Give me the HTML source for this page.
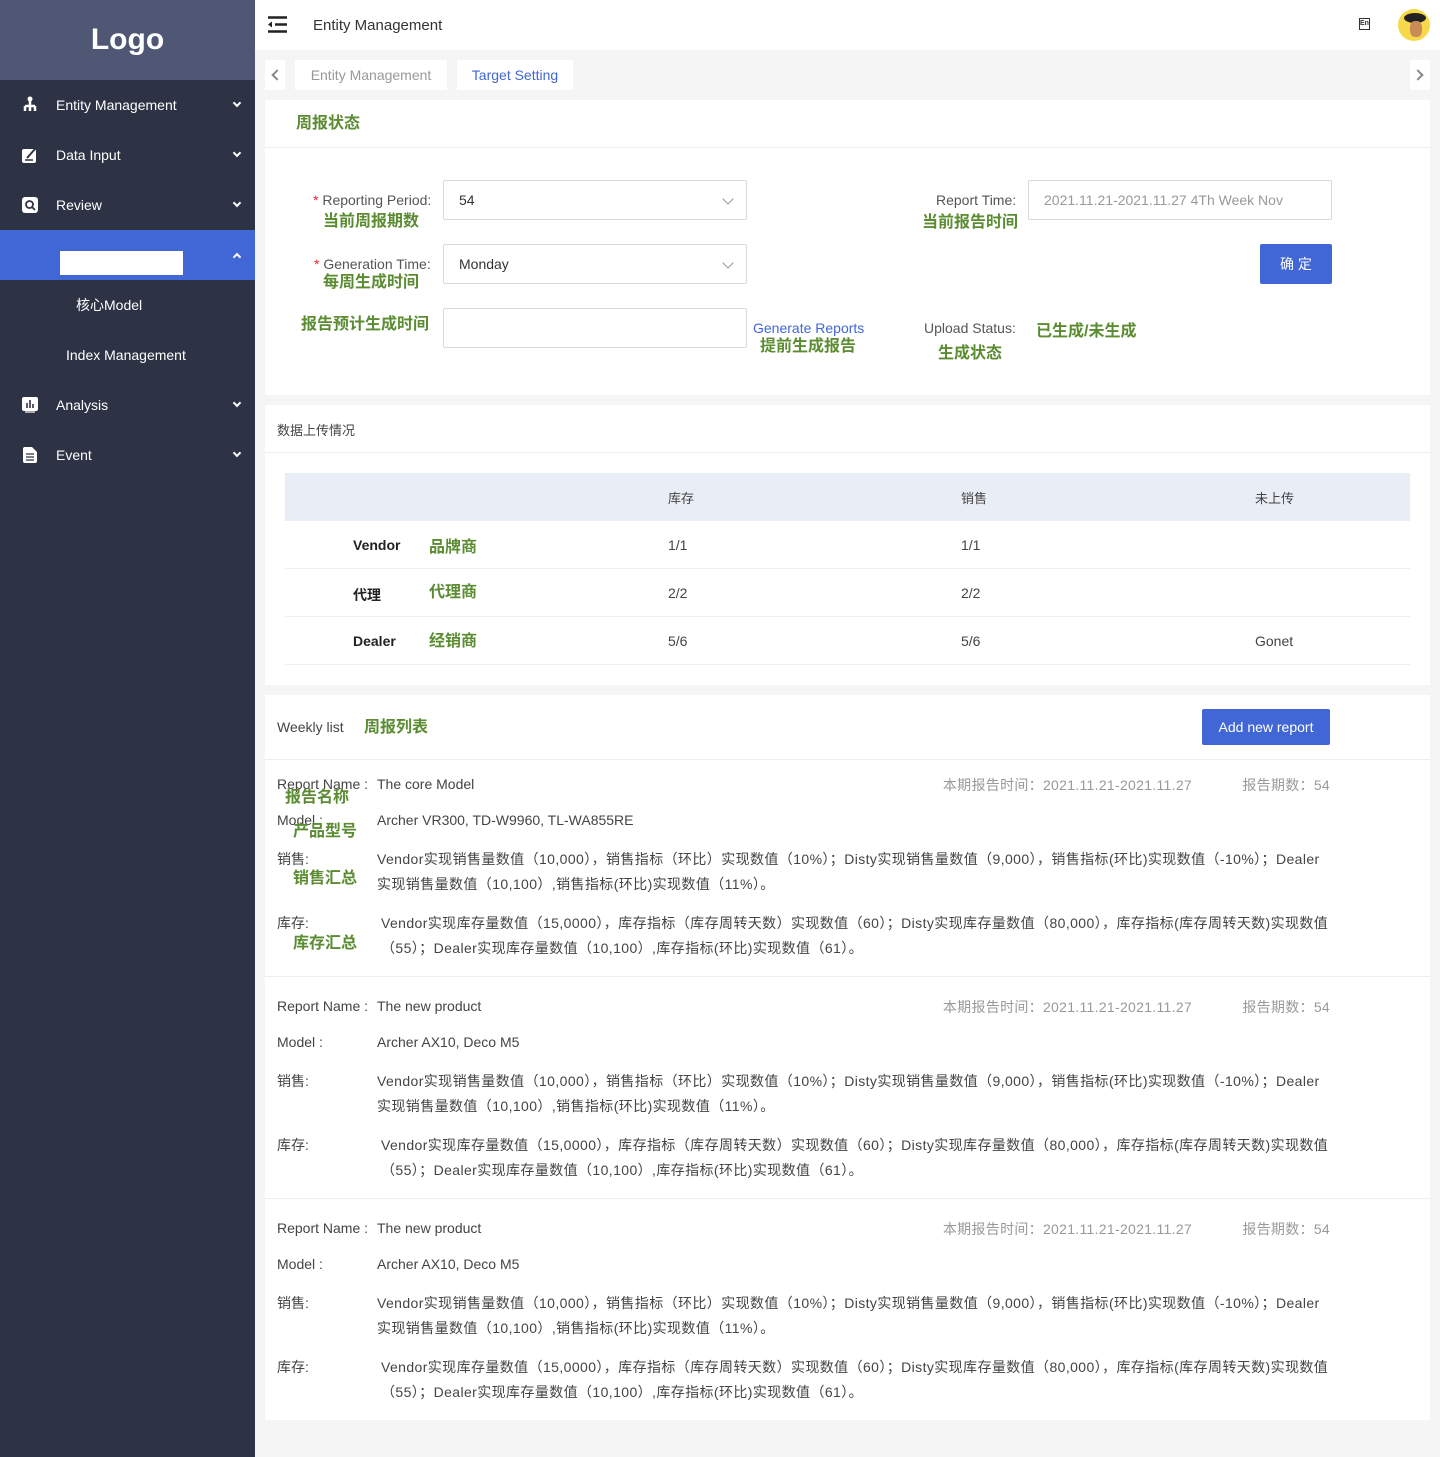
<!DOCTYPE html>
<html><head><meta charset="utf-8">
<style>
*{margin:0;padding:0;box-sizing:border-box}
body{width:1440px;height:1457px;background:#f5f5f5;font-family:"Liberation Sans","Noto Sans CJK SC",sans-serif;position:relative;overflow:hidden;color:#333}
.a{position:absolute;white-space:nowrap}
.g{color:#5b8c32;font-weight:bold;font-size:16px;margin-top:-3px}
.side{position:absolute;left:0;top:0;width:255px;height:1457px;background:#2e3245}
.logo{position:absolute;left:0;top:0;width:255px;height:80px;background:#4f5775;color:#fff;font-weight:bold;font-size:30px;text-align:center;line-height:80px}
.mi{position:absolute;left:0;width:255px;height:50px;color:#fff;font-size:14px;line-height:50px}
.mi .t{position:absolute;left:56px}
.mi .c{position:absolute;right:15px;top:20px;width:6px;height:6px;border-right:2px solid #fff;border-bottom:2px solid #fff;transform:rotate(45deg)}
.mi .cu{position:absolute;right:15px;top:24px;width:6px;height:6px;border-left:2px solid #fff;border-top:2px solid #fff;transform:rotate(45deg)}
.ic{position:absolute;left:22px;top:17px}
.card{position:absolute;left:265px;width:1165px;background:#fff}
.inp{position:absolute;border:1px solid #d9d9d9;border-radius:2px;background:#fff;height:40px;font-size:14px;line-height:38px;padding-left:15px;color:#333}
.chev{position:absolute;right:14px;top:14px;width:8px;height:8px;border-right:1px solid #999;border-bottom:1px solid #999;transform:rotate(45deg)}
.lbl{font-size:14px;color:#555}
.btn{position:absolute;background:#4166d5;color:#fff;border-radius:2px;text-align:center;font-size:14px}
.f14{font-size:14px;color:#444}
.b{letter-spacing:0.4px}
.meta{font-size:14px;color:#999;letter-spacing:0.3px}
</style></head><body>
<div class="side">
<div class="logo">Logo</div>
<div class="mi" style="top:80px"><svg class="a" style="left:22px;top:16px" width="16" height="17" viewBox="0 0 16 17"><circle cx="8" cy="3" r="2.5" fill="#fff"/><path d="M8 5v5M3 10h10M3 10v5M13 10v5M8 10v5" stroke="#fff" stroke-width="2.5"/></svg><span class="t">Entity Management</span><span class="c"></span></div>
<div class="mi" style="top:130px"><svg class="ic" width="16" height="16"><rect x="0" y="2" width="14" height="14" rx="2" fill="#fff"/><path d="M5 11l8-9" stroke="#2e3245" stroke-width="2"/><path d="M3 13h8" stroke="#2e3245" stroke-width="1.5"/></svg><span class="t">Data Input</span><span class="c"></span></div>
<div class="mi" style="top:180px"><svg class="ic" width="16" height="16"><rect x="0" y="0" width="16" height="16" rx="3" fill="#fff"/><circle cx="7.5" cy="7.5" r="3.5" fill="none" stroke="#2e3245" stroke-width="1.8"/><path d="M10 10l3 3" stroke="#2e3245" stroke-width="1.8"/></svg><span class="t">Review</span><span class="c"></span></div>
<div class="mi" style="top:230px;background:#4166d5"><div class="a" style="left:60px;top:21px;width:123px;height:24px;background:#fff"></div><span class="cu"></span></div>
<div class="mi" style="top:280px"><span class="a" style="left:76px">核心Model</span></div>
<div class="mi" style="top:330px"><span class="a" style="left:66px">Index Management</span></div>
<div class="mi" style="top:380px"><svg class="ic" width="16" height="16"><rect x="0" y="0" width="16" height="14" rx="2" fill="#fff"/><path d="M5 11V6M8 11V3M11 11V7" stroke="#2e3245" stroke-width="1.6"/><rect x="3" y="14" width="10" height="2" fill="#aaa"/></svg><span class="t">Analysis</span><span class="c"></span></div>
<div class="mi" style="top:430px"><svg class="ic" width="16" height="16"><path d="M1 2a2 2 0 012-2h7l5 5v9a2 2 0 01-2 2H3a2 2 0 01-2-2z" fill="#fff"/><path d="M4 7h8M4 10h8M4 13h8" stroke="#2e3245" stroke-width="1.3"/></svg><span class="t">Event</span><span class="c"></span></div>
</div>
<div class="a" style="left:255px;top:0;width:1185px;height:50px;background:#fff"></div>
<svg class="a" style="left:268px;top:16px" width="20" height="17"><path d="M0 1.5h19M7 8.5h12M0 15.5h19" stroke="#222" stroke-width="2.5"/><path d="M0 8.5l4-3v6z" fill="#222"/></svg>
<span class="a" style="left:313px;top:17px;font-size:15px;color:#333">Entity Management</span>
<div class="a" style="left:1359px;top:18px;width:11px;height:12px;border:1px solid #333;font-size:7px;line-height:10px;text-align:center;font-weight:bold">En</div>
<div class="a" style="left:1398px;top:9px;width:32px;height:32px;border-radius:50%;background:#f5d94a;overflow:hidden"><div class="a" style="left:6px;top:4px;width:22px;height:10px;border-radius:50%;background:#222"></div><div class="a" style="left:12px;top:12px;width:12px;height:16px;border-radius:40%;background:#c98a5a"></div></div>
<div class="a" style="left:265px;top:60px;width:20px;height:30px;background:#fff"><div class="a" style="left:8px;top:11px;width:8px;height:8px;border-left:2px solid #888;border-bottom:2px solid #888;transform:rotate(45deg)"></div></div>
<div class="a" style="left:295px;top:60px;width:152px;height:30px;background:#fff;color:#999;font-size:14px;text-align:center;line-height:30px">Entity Management</div>
<div class="a" style="left:457px;top:60px;width:116px;height:30px;background:#fff;color:#4166d5;font-size:14px;text-align:center;line-height:30px">Target Setting</div>
<div class="a" style="left:1410px;top:60px;width:20px;height:30px;background:#fff"><div class="a" style="left:4px;top:11px;width:8px;height:8px;border-right:2px solid #888;border-top:2px solid #888;transform:rotate(45deg)"></div></div>

<div class="card" style="top:100px;height:295px"></div>
<div class="a" style="left:265px;top:147px;width:1165px;height:1px;background:#eee"></div>
<span class="a g" style="left:296px;top:112px">周报状态</span>
<span class="a lbl" style="left:313px;top:192px"><span style="color:#f5222d">*</span> Reporting Period:</span>
<span class="a g" style="left:323px;top:210px">当前周报期数</span>
<div class="inp" style="left:443px;top:180px;width:304px">54<div class="chev"></div></div>
<span class="a lbl" style="left:314px;top:256px"><span style="color:#f5222d">*</span> Generation Time:</span>
<span class="a g" style="left:323px;top:271px">每周生成时间</span>
<div class="inp" style="left:443px;top:244px;width:304px">Monday<div class="chev"></div></div>
<span class="a g" style="left:301px;top:313px">报告预计生成时间</span>
<div class="inp" style="left:443px;top:308px;width:304px"></div>
<span class="a" style="left:753px;top:320px;font-size:14px;color:#4166d5">Generate Reports</span>
<span class="a g" style="left:760px;top:335px">提前生成报告</span>
<span class="a lbl" style="left:936px;top:192px">Report Time:</span>
<span class="a g" style="left:922px;top:211px">当前报告时间</span>
<div class="inp" style="left:1028px;top:180px;width:304px;color:#999">2021.11.21-2021.11.27 4Th Week Nov</div>
<div class="btn" style="left:1260px;top:244px;width:72px;height:40px;line-height:40px">确 定</div>
<span class="a lbl" style="left:924px;top:320px">Upload Status:</span>
<span class="a g" style="left:1036px;top:320px">已生成/未生成</span>
<span class="a g" style="left:938px;top:342px">生成状态</span>

<div class="card" style="top:405px;height:280px"></div>
<div class="a" style="left:265px;top:452px;width:1165px;height:1px;background:#eee"></div>
<span class="a f14" style="left:277px;top:420px;font-size:13px">数据上传情况</span>
<div class="a" style="left:285px;top:473px;width:1125px;height:48px;background:#e9edf5"></div>
<span class="a f14" style="left:668px;top:488px;font-size:13px">库存</span>
<span class="a f14" style="left:961px;top:488px;font-size:13px">销售</span>
<span class="a f14" style="left:1255px;top:488px;font-size:13px">未上传</span>
<div class="a" style="left:285px;top:568px;width:1125px;height:1px;background:#eee"></div>
<div class="a" style="left:285px;top:616px;width:1125px;height:1px;background:#eee"></div>
<div class="a" style="left:285px;top:664px;width:1125px;height:1px;background:#eee"></div>
<span class="a" style="left:353px;top:537px;font-size:14px;font-weight:bold;color:#222">Vendor</span><span class="a g" style="left:429px;top:536px">品牌商</span><span class="a f14" style="left:668px;top:537px">1/1</span><span class="a f14" style="left:961px;top:537px">1/1</span>
<span class="a" style="left:353px;top:585px;font-size:14px;font-weight:bold;color:#222">代理</span><span class="a g" style="left:429px;top:581px">代理商</span><span class="a f14" style="left:668px;top:585px">2/2</span><span class="a f14" style="left:961px;top:585px">2/2</span>
<span class="a" style="left:353px;top:633px;font-size:14px;font-weight:bold;color:#222">Dealer</span><span class="a g" style="left:429px;top:630px">经销商</span><span class="a f14" style="left:668px;top:633px">5/6</span><span class="a f14" style="left:961px;top:633px">5/6</span><span class="a f14" style="left:1255px;top:633px">Gonet</span>

<div class="card" style="top:695px;height:725px"></div>
<span class="a f14" style="left:277px;top:719px">Weekly list</span>
<span class="a g" style="left:364px;top:716px">周报列表</span>
<div class="btn" style="left:1202px;top:709px;width:128px;height:36px;line-height:36px">Add new report</div>
<div class="a" style="left:265px;top:759px;width:1165px;height:1px;background:#eee"></div>
<div class="a" style="left:265px;top:976px;width:1165px;height:1px;background:#eee"></div>
<div class="a" style="left:265px;top:1198px;width:1165px;height:1px;background:#eee"></div>

<!-- block 1 -->
<span class="a f14" style="left:277px;top:776px">Report Name :</span><span class="a f14" style="left:377px;top:776px">The core Model</span>
<span class="a meta" style="right:248px;top:775px">本期报告时间：2021.11.21-2021.11.27</span><span class="a meta" style="right:110px;top:775px">报告期数：54</span>
<span class="a g" style="left:285px;top:786px">报告名称</span>
<span class="a f14" style="left:277px;top:812px">Model :</span><span class="a f14" style="left:377px;top:812px">Archer VR300, TD-W9960, TL-WA855RE</span>
<span class="a g" style="left:293px;top:820px">产品型号</span>
<span class="a f14" style="left:277px;top:849px">销售:</span>
<span class="a g" style="left:293px;top:867px">销售汇总</span>
<span class="a f14 b" style="left:377px;top:849px">Vendor实现销售量数值（10,000），销售指标（环比）实现数值（10%）；Disty实现销售量数值（9,000），销售指标(环比)实现数值（-10%）；Dealer</span>
<span class="a f14 b" style="left:377px;top:874px">实现销售量数值（10,100）,销售指标(环比)实现数值（11%）。</span>
<span class="a f14" style="left:277px;top:913px">库存:</span>
<span class="a g" style="left:293px;top:932px">库存汇总</span>
<span class="a f14 b" style="left:381px;top:913px">Vendor实现库存量数值（15,0000），库存指标（库存周转天数）实现数值（60）；Disty实现库存量数值（80,000），库存指标(库存周转天数)实现数值</span>
<span class="a f14 b" style="left:381px;top:938px">（55）；Dealer实现库存量数值（10,100）,库存指标(环比)实现数值（61）。</span>

<!-- block 2 -->
<span class="a f14" style="left:277px;top:998px">Report Name :</span><span class="a f14" style="left:377px;top:998px">The new product</span>
<span class="a meta" style="right:248px;top:997px">本期报告时间：2021.11.21-2021.11.27</span><span class="a meta" style="right:110px;top:997px">报告期数：54</span>
<span class="a f14" style="left:277px;top:1034px">Model :</span><span class="a f14" style="left:377px;top:1034px">Archer AX10, Deco M5</span>
<span class="a f14" style="left:277px;top:1071px">销售:</span>
<span class="a f14 b" style="left:377px;top:1071px">Vendor实现销售量数值（10,000），销售指标（环比）实现数值（10%）；Disty实现销售量数值（9,000），销售指标(环比)实现数值（-10%）；Dealer</span>
<span class="a f14 b" style="left:377px;top:1096px">实现销售量数值（10,100）,销售指标(环比)实现数值（11%）。</span>
<span class="a f14" style="left:277px;top:1135px">库存:</span>
<span class="a f14 b" style="left:381px;top:1135px">Vendor实现库存量数值（15,0000），库存指标（库存周转天数）实现数值（60）；Disty实现库存量数值（80,000），库存指标(库存周转天数)实现数值</span>
<span class="a f14 b" style="left:381px;top:1160px">（55）；Dealer实现库存量数值（10,100）,库存指标(环比)实现数值（61）。</span>

<!-- block 3 -->
<span class="a f14" style="left:277px;top:1220px">Report Name :</span><span class="a f14" style="left:377px;top:1220px">The new product</span>
<span class="a meta" style="right:248px;top:1219px">本期报告时间：2021.11.21-2021.11.27</span><span class="a meta" style="right:110px;top:1219px">报告期数：54</span>
<span class="a f14" style="left:277px;top:1256px">Model :</span><span class="a f14" style="left:377px;top:1256px">Archer AX10, Deco M5</span>
<span class="a f14" style="left:277px;top:1293px">销售:</span>
<span class="a f14 b" style="left:377px;top:1293px">Vendor实现销售量数值（10,000），销售指标（环比）实现数值（10%）；Disty实现销售量数值（9,000），销售指标(环比)实现数值（-10%）；Dealer</span>
<span class="a f14 b" style="left:377px;top:1318px">实现销售量数值（10,100）,销售指标(环比)实现数值（11%）。</span>
<span class="a f14" style="left:277px;top:1357px">库存:</span>
<span class="a f14 b" style="left:381px;top:1357px">Vendor实现库存量数值（15,0000），库存指标（库存周转天数）实现数值（60）；Disty实现库存量数值（80,000），库存指标(库存周转天数)实现数值</span>
<span class="a f14 b" style="left:381px;top:1382px">（55）；Dealer实现库存量数值（10,100）,库存指标(环比)实现数值（61）。</span>
</body></html>
